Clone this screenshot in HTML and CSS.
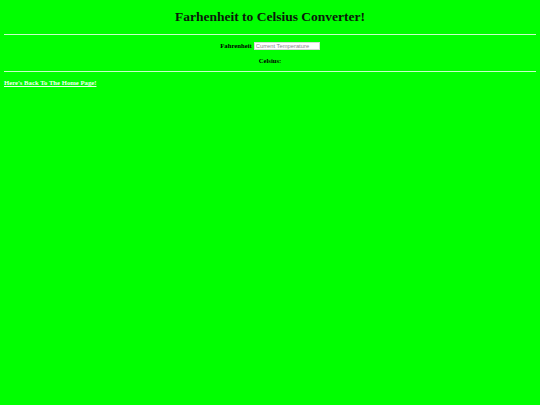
FILE: index.html
```html
<!DOCTYPE html>
<html>
<head>
<meta charset="utf-8">
<title>Fahrenheit to Celsius Converter</title>
<link rel="stylesheet" href="styles.css">
</head>
<body>
<h2 class="title">Farhenheit to Celsius Converter!</h2>
<hr class="rule">
<form class="converter">
  <div class="row">
    <label class="label" for="f">Fahrenheit</label>
    <input class="temp" id="f" type="text" placeholder="Current Temperature">
  </div>
  <div class="row">
    <span class="label">Celsius:</span>
  </div>
</form>
<hr class="rule">
<a class="home" href="#">Here's Back To The Home Page!</a>
</body>
</html>
```
FILE: styles.css
```css
html, body {
  background: #00ff00;
}
body {
  margin: 0;
  padding: 0 4px;
  font-family: "Liberation Serif", "Times New Roman", serif;
  color: #000;
}
.title {
  margin: 9px 0;
  font-size: 13.5px;
  line-height: 16px;
  text-align: center;
  font-weight: bold;
  color: #0a1a0a;
}
.rule {
  margin: 0;
  border: 0;
  border-top: 1px solid #c8ffc8;
  height: 0;
}
.converter {
  display: flex;
  flex-direction: column;
  align-items: center;
  gap: 7px;
  padding: 7px 0 6px;
}
.row {
  display: flex;
  align-items: center;
  gap: 2px;
  height: 8px;
}
.label {
  font-size: 6.7px;
  font-weight: bold;
  line-height: 8px;
}
.temp {
  width: 66px;
  height: 8px;
  box-sizing: border-box;
  border: 1px solid #d8d8d8;
  background: #fff;
  padding: 0 1px;
  font-family: "Liberation Sans", Arial, sans-serif;
  font-size: 5.8px;
  outline: none;
}
.temp::placeholder {
  color: #8a8a8a;
}
.home {
  display: block;
  width: max-content;
  margin-top: 7px;
  font-size: 6.7px;
  line-height: 8px;
  font-weight: bold;
  color: #f0fff0;
  text-decoration: underline;
}
```
